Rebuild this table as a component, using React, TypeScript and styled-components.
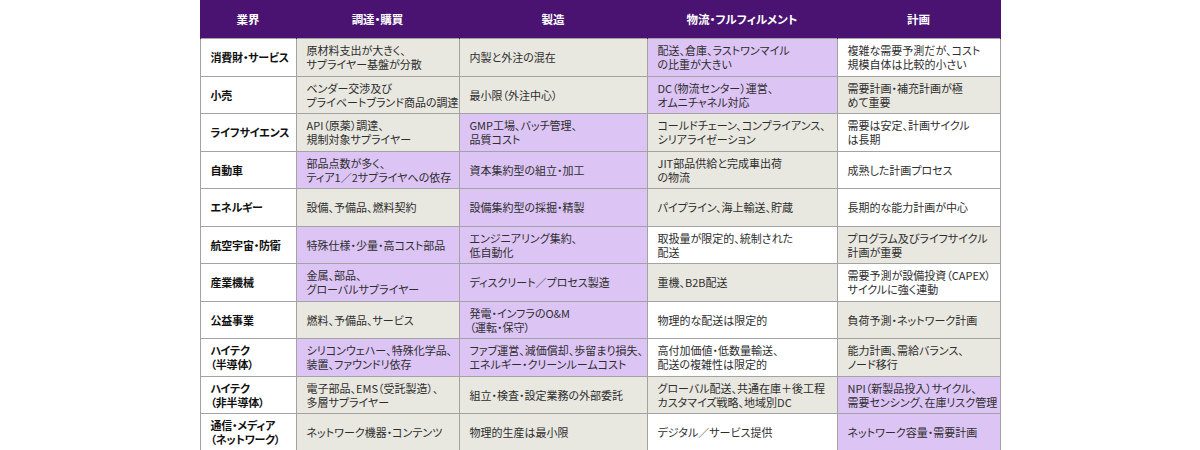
import React from "react";
import styled, { createGlobalStyle } from "styled-components";

type Tone = "w" | "g" | "p";

const GlobalStyle = createGlobalStyle`
  html, body {
    margin: 0;
    padding: 0;
    background: #ffffff;
  }
  body {
    font-family: "Noto Sans CJK JP", "Noto Sans", sans-serif;
    font-feature-settings: "palt" 1;
  }
`;

const Page = styled.div`
  width: 1200px;
  height: 450px;
  display: flex;
  justify-content: center;
  overflow: hidden;
`;

const Table = styled.table`
  width: 800px;
  height: 450px;
  border-collapse: collapse;
  table-layout: fixed;
`;

const HeadCell = styled.th`
  height: 38px;
  padding: 0;
  background: #4a1372;
  color: #ffffff;
  font-size: 11.5px;
  font-weight: 700;
  text-align: center;
  border-left: 1px solid #4a1372;
  border-right: 1px solid #4a1372;
`;

const Row = styled.tr`
  height: 37.5px;
`;

const toneColor: Record<Tone, string> = {
  w: "#ffffff",
  g: "#e8e7e0",
  p: "#dcc4f5",
};

const Cell = styled.td<{ $tone: Tone }>`
  padding: 0 3px 0 10px;
  background: ${(p) => toneColor[p.$tone]};
  border: 1px solid #a3a3a3;
  color: #2e2e2e;
  font-size: 11px;
  line-height: 14px;
  vertical-align: middle;
  white-space: pre;
  overflow: hidden;
`;

const IndustryCell = styled.td`
  padding: 0 2px 0 10px;
  background: #ffffff;
  border: 1px solid #a3a3a3;
  color: #111111;
  font-size: 11px;
  font-weight: 700;
  line-height: 14px;
  letter-spacing: -0.2px;
  white-space: pre;
  overflow: hidden;
`;

const columns = [
  { title: "業界", width: 96 },
  { title: "調達・購買", width: 163 },
  { title: "製造", width: 188 },
  { title: "物流・フルフィルメント", width: 190 },
  { title: "計画", width: 163 },
];

const rows: { name: string; cells: [Tone, string][] }[] = [
  {
    name: "消費財・サービス",
    cells: [
      ["g", "原材料支出が大きく、\nサプライヤー基盤が分散"],
      ["g", "内製と外注の混在"],
      ["p", "配送、倉庫、ラストワンマイル\nの比重が大きい"],
      ["w", "複雑な需要予測だが、コスト\n規模自体は比較的小さい"],
    ],
  },
  {
    name: "小売",
    cells: [
      ["g", "ベンダー交渉及び\nプライベートブランド商品の調達"],
      ["g", "最小限（外注中心）"],
      ["p", "DC（物流センター）運営、\nオムニチャネル対応"],
      ["g", "需要計画・補充計画が極\nめて重要"],
    ],
  },
  {
    name: "ライフサイエンス",
    cells: [
      ["g", "API（原薬）調達、\n規制対象サプライヤー"],
      ["p", "GMP工場、バッチ管理、\n品質コスト"],
      ["g", "コールドチェーン、コンプライアンス、\nシリアライゼーション"],
      ["w", "需要は安定、計画サイクル\nは長期"],
    ],
  },
  {
    name: "自動車",
    cells: [
      ["p", "部品点数が多く、\nティア1／2サプライヤへの依存"],
      ["p", "資本集約型の組立・加工"],
      ["g", "JIT部品供給と完成車出荷\nの物流"],
      ["w", "成熟した計画プロセス"],
    ],
  },
  {
    name: "エネルギー",
    cells: [
      ["g", "設備、予備品、燃料契約"],
      ["p", "設備集約型の採掘・精製"],
      ["g", "パイプライン、海上輸送、貯蔵"],
      ["w", "長期的な能力計画が中心"],
    ],
  },
  {
    name: "航空宇宙・防衛",
    cells: [
      ["p", "特殊仕様・少量・高コスト部品"],
      ["p", "エンジニアリング集約、\n低自動化"],
      ["w", "取扱量が限定的、統制された\n配送"],
      ["g", "プログラム及びライフサイクル\n計画が重要"],
    ],
  },
  {
    name: "産業機械",
    cells: [
      ["p", "金属、部品、\nグローバルサプライヤー"],
      ["p", "ディスクリート／プロセス製造"],
      ["g", "重機、B2B配送"],
      ["w", "需要予測が設備投資（CAPEX）\nサイクルに強く連動"],
    ],
  },
  {
    name: "公益事業",
    cells: [
      ["g", "燃料、予備品、サービス"],
      ["p", "発電・インフラのO&M\n（運転・保守）"],
      ["w", "物理的な配送は限定的"],
      ["g", "負荷予測・ネットワーク計画"],
    ],
  },
  {
    name: "ハイテク\n（半導体）",
    cells: [
      ["p", "シリコンウェハー、特殊化学品、\n装置、ファウンドリ依存"],
      ["p", "ファブ運営、減価償却、歩留まり損失、\nエネルギー・クリーンルームコスト"],
      ["w", "高付加価値・低数量輸送、\n配送の複雑性は限定的"],
      ["g", "能力計画、需給バランス、\nノード移行"],
    ],
  },
  {
    name: "ハイテク\n（非半導体）",
    cells: [
      ["g", "電子部品、EMS（受託製造）、\n多層サプライヤー"],
      ["g", "組立・検査・設定業務の外部委託"],
      ["g", "グローバル配送、共通在庫＋後工程\nカスタマイズ戦略、地域別DC"],
      ["p", "NPI（新製品投入）サイクル、\n需要センシング、在庫リスク管理"],
    ],
  },
  {
    name: "通信・メディア\n（ネットワーク）",
    cells: [
      ["g", "ネットワーク機器・コンテンツ"],
      ["g", "物理的生産は最小限"],
      ["w", "デジタル／サービス提供"],
      ["p", "ネットワーク容量・需要計画"],
    ],
  },
];

export default function App() {
  return (
    <>
      <GlobalStyle />
      <Page>
        <Table>
          <colgroup>
            {columns.map((c) => (
              <col key={c.title} style={{ width: c.width }} />
            ))}
          </colgroup>
          <thead>
            <tr>
              {columns.map((c) => (
                <HeadCell key={c.title}>{c.title}</HeadCell>
              ))}
            </tr>
          </thead>
          <tbody>
            {rows.map((r) => (
              <Row key={r.name}>
                <IndustryCell>{r.name}</IndustryCell>
                {r.cells.map(([tone, text], i) => (
                  <Cell key={i} $tone={tone}>
                    {text}
                  </Cell>
                ))}
              </Row>
            ))}
          </tbody>
        </Table>
      </Page>
    </>
  );
}
